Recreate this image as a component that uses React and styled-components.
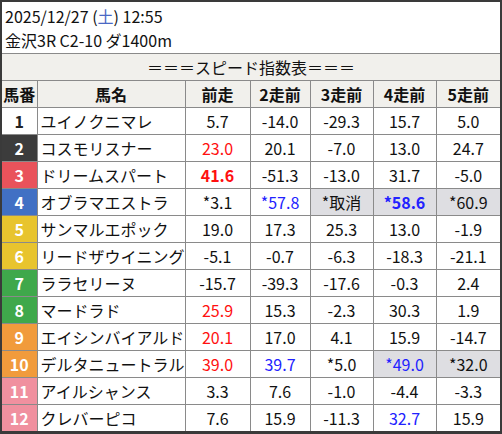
import React from "react";
import styled, { createGlobalStyle } from "styled-components";

const Global = createGlobalStyle`
  html, body { margin: 0; padding: 0; background: #fff; }
  body { font-family: "Noto Sans CJK JP", "Noto Sans", sans-serif; }
`;

const Frame = styled.div`
  width: 502px;
  height: 434px;
  box-sizing: border-box;
  border: 2px solid #3a3a3a;
  border-bottom-width: 3px;
  background: #fff;
  overflow: hidden;
`;

const Info = styled.div`
  height: 51px;
  box-sizing: border-box;
  padding: 2px 0 0 3px;
  font-size: 16px;
  line-height: 24px;
  color: #111;
`;

const Sat = styled.span`
  color: #4a68c4;
`;

const Table = styled.table`
  width: 498px;
  table-layout: fixed;
  border-collapse: collapse;
  font-size: 16px;
  color: #111;
`;

const TitleCell = styled.td`
  height: 26px;
  padding: 0;
  background: #f1f0ec;
  border-top: 1px solid #8a8a8a;
  text-align: center;
  line-height: 26px;
`;

const Th = styled.th`
  height: 26px;
  padding: 0;
  background: #f1f0ec;
  border: 1px solid #8a8a8a;
  font-weight: 700;
  text-align: center;
  &:first-child { border-left: none; }
  &:last-child { border-right: none; }
`;

const Td = styled.td`
  height: 26px;
  padding: 0;
  border: 1px solid #8a8a8a;
  text-align: center;
  background: ${(p) => (p.$hl ? "#dedee2" : "#fff")};
  color: ${(p) => (p.$c === "r" ? "#ff1010" : p.$c === "b" ? "#2222ff" : "#111")};
  font-weight: ${(p) => (p.$bold ? 700 : 400)};
  white-space: nowrap;
  overflow: hidden;
  &:last-child { border-right: none; }
  tr:last-child > & { border-bottom: none; }
`;

const NumCell = styled(Td)`
  border-left: none;
  background: ${(p) => p.$bg};
  color: ${(p) => p.$fg};
  font-weight: 700;
`;

const NameCell = styled(Td)`
  text-align: left;
  padding-left: 3px;
`;

const WAKU = [
  ["#ffffff", "#222"],
  ["#3c3c3c", "#fff"],
  ["#e9535b", "#fff"],
  ["#4170c4", "#fff"],
  ["#e8c42e", "#fff"],
  ["#3fa84b", "#fff"],
  ["#f19b3c", "#fff"],
  ["#f0909f", "#fff"],
];
const wakuOf = (n) => (n <= 4 ? n - 1 : n <= 6 ? 4 : n <= 8 ? 5 : n <= 10 ? 6 : 7);

// cell: [text, color, bold, highlight]
const rows = [
  [1, "ユイノクニマレ", [["5.7"], ["-14.0"], ["-29.3"], ["15.7"], ["5.0"]]],
  [2, "コスモリスナー", [["23.0", "r"], ["20.1"], ["-7.0"], ["13.0"], ["24.7"]]],
  [3, "ドリームスパート", [["41.6", "r", 1], ["-51.3"], ["-13.0"], ["31.7"], ["-5.0"]]],
  [4, "オブラマエストラ", [["*3.1"], ["*57.8", "b"], ["*取消", "", 0, 1], ["*58.6", "b", 1, 1], ["*60.9", "", 0, 1]]],
  [5, "サンマルエポック", [["19.0"], ["17.3"], ["25.3"], ["13.0"], ["-1.9"]]],
  [6, "リードザウイニング", [["-5.1"], ["-0.7"], ["-6.3"], ["-18.3"], ["-21.1"]]],
  [7, "ララセリーヌ", [["-15.7"], ["-39.3"], ["-17.6"], ["-0.3"], ["2.4"]]],
  [8, "マードラド", [["25.9", "r"], ["15.3"], ["-2.3"], ["30.3"], ["1.9"]]],
  [9, "エイシンバイアルド", [["20.1", "r"], ["17.0"], ["4.1"], ["15.9"], ["-14.7"]]],
  [10, "デルタニュートラル", [["39.0", "r"], ["39.7", "b"], ["*5.0"], ["*49.0", "b", 0, 1], ["*32.0", "", 0, 1]]],
  [11, "アイルシャンス", [["3.3"], ["7.6"], ["-1.0"], ["-4.4"], ["-3.3"]]],
  [12, "クレバーピコ", [["7.6"], ["15.9"], ["-11.3"], ["32.7", "b"], ["15.9"]]],
];

const heads = ["馬番", "馬名", "前走", "2走前", "3走前", "4走前", "5走前"];
const widths = [35, 148, 65, 60, 63, 63, 64];

export default function App() {
  return (
    <>
      <Global />
      <Frame>
        <Info>
          <div>
            2025/12/27 (<Sat>土</Sat>) 12:55
          </div>
          <div>金沢3R C2-10 ダ1400m</div>
        </Info>
        <Table>
          <colgroup>
            {widths.map((w, i) => (
              <col key={i} style={{ width: w }} />
            ))}
          </colgroup>
          <tbody>
            <tr>
              <TitleCell colSpan={7}>＝＝＝スピード指数表＝＝＝</TitleCell>
            </tr>
            <tr>
              {heads.map((h) => (
                <Th key={h}>{h}</Th>
              ))}
            </tr>
            {rows.map(([n, name, cells]) => {
              const [bg, fg] = WAKU[wakuOf(n)];
              return (
                <tr key={n}>
                  <NumCell $bg={bg} $fg={fg}>
                    {n}
                  </NumCell>
                  <NameCell>{name}</NameCell>
                  {cells.map(([t, c, b, hl], i) => (
                    <Td key={i} $c={c} $bold={b} $hl={hl}>
                      {t}
                    </Td>
                  ))}
                </tr>
              );
            })}
          </tbody>
        </Table>
      </Frame>
    </>
  );
}
